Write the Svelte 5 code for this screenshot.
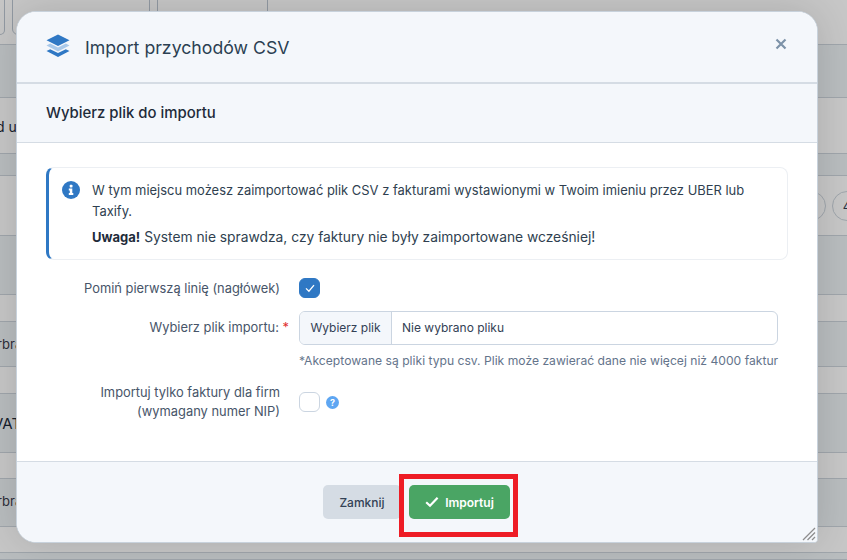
<script>
  const rows = [
    { h: 45, t: 'l' },
    { h: 53, t: 'd' },
    { h: 56, t: 'l', text: 'd u', cls: 'txt-a' },
    { h: 22, t: 'd' },
    { h: 60, t: 'l', circles: true },
    { h: 59, t: 'd' },
    { h: 27, t: 'l' },
    { h: 45, t: 'd', text: 'rbra', cls: 'txt-b' },
    { h: 27, t: 'l' },
    { h: 59, t: 'd', text: 'VAT', cls: 'txt-c' },
    { h: 26, t: 'l' },
    { h: 48, t: 'd', text: 'rbra', cls: 'txt-b' },
    { h: 26, t: 'l' },
    { h: 7, t: 'd' }
  ];
</script>

<div class="page">
  <div class="top-buttons">
    <span class="tb tb0"></span>
    <span class="tb tb1"></span>
    <span class="tb tb2"></span>
  </div>
  {#each rows as r, i}
    <div class="row {r.t}" class:first={i === 0} style="height:{r.h}px">
      {#if r.text}<span class={r.cls}>{r.text}</span>{/if}
      {#if r.circles}
        <span class="circle c1"></span>
        <span class="circle c2">4</span>
      {/if}
    </div>
  {/each}
  <div class="overlay"></div>

  <div class="modal">
    <header class="head">
      <svg class="layers" viewBox="0 0 24 24" width="24" height="24" aria-hidden="true">
        <path fill="#2f78c4" d="M12 0.5 L23.5 6.2 L12 12 L0.5 6.2 Z" />
        <path fill="#a9c9ea" d="M4.2 9.6 L12 13.5 L19.8 9.6 L23.5 11.6 L12 17.4 L0.5 11.6 Z" />
        <path fill="#2f78c4" d="M4.2 15.2 L12 19 L19.8 15.2 L23.5 17.1 L12 23 L0.5 17.1 Z" />
      </svg>
      <h2>Import przychodów CSV</h2>
      <svg class="close" viewBox="0 0 12 12" width="12" height="12" aria-hidden="true">
        <path d="M1.5 1.5 L10.5 10.5 M10.5 1.5 L1.5 10.5" stroke="#7d92a8" stroke-width="2.2" fill="none" />
      </svg>
    </header>
    <div class="sub"><h3>Wybierz plik do importu</h3></div>
    <div class="body">
      <div class="alert">
        <svg class="info" viewBox="0 0 18 18" width="18" height="18" aria-hidden="true">
          <circle cx="9" cy="9" r="9" fill="#2f78c4" />
          <rect x="7.7" y="3.8" width="2.8" height="2.6" rx="0.6" fill="#fff" />
          <path fill="#fff" d="M6.8 7.6 H10.3 V12 H11.3 V13.9 H6.8 V12 H7.8 V9.5 H6.8 Z" />
        </svg>
        <div class="alert-text">
          <p>W tym miejscu możesz zaimportować plik CSV z fakturami wystawionymi w Twoim imieniu przez UBER lub Taxify.</p>
          <p class="warn"><b>Uwaga!</b> System nie sprawdza, czy faktury nie były zaimportowane wcześniej!</p>
        </div>
      </div>

      <div class="form">
        <div class="frow r1">
          <div class="label">Pomiń pierwszą linię (nagłówek)</div>
          <span class="check on">
            <svg viewBox="0 0 12 12" width="12" height="12" aria-hidden="true">
              <path d="M2 6.4 L4.9 9.2 L10 3.2" stroke="#fff" stroke-width="1.3" fill="none" />
            </svg>
          </span>
        </div>
        <div class="frow r2">
          <div class="label">Wybierz plik importu: <span class="req">*</span></div>
          <div class="control">
            <div class="file">
              <span class="file-btn">Wybierz plik</span>
              <span class="file-name">Nie wybrano pliku</span>
            </div>
            <div class="hint">*Akceptowane są pliki typu csv. Plik może zawierać dane nie więcej niż 4000 faktur</div>
          </div>
        </div>
        <div class="frow r3">
          <div class="label">Importuj tylko faktury dla firm<br />(wymagany numer NIP)</div>
          <span class="check"></span>
          <span class="help">?</span>
        </div>
      </div>
    </div>
    <footer class="foot">
      <button class="btn gray">Zamknij</button>
      <span class="mark">
        <button class="btn green">
          <svg viewBox="0 0 14 12" width="14" height="12" aria-hidden="true">
            <path d="M1.2 6.2 L5 9.8 L12.6 1.8" stroke="#fff" stroke-width="2.2" fill="none" />
          </svg>
          Importuj
        </button>
      </span>
      <svg class="grip" viewBox="0 0 14 14" width="14" height="14" aria-hidden="true">
        <path d="M1 13 L13 1 M5.5 13 L13 5.5 M10 13 L13 10" stroke="#8e8e8e" stroke-width="1.3" fill="none" />
      </svg>
    </footer>
  </div>
</div>

<style>
  :global(body) {
    margin: 0;
    background: #fff;
  }
  .page {
    position: relative;
    width: 847px;
    height: 560px;
    overflow: hidden;
    font-family: Inter, "Liberation Sans", sans-serif;
    color: #334155;
  }
  .top-buttons {
    position: absolute;
    top: -10px;
    left: 0;
    display: flex;
    gap: 7px;
    z-index: 1;
  }
  .tb {
    display: block;
    height: 45px;
    border: 1px solid #bcc6d1;
    border-radius: 6px;
    box-sizing: border-box;
  }
  .tb0 { width: 5px; border-left: 0; border-radius: 0 6px 6px 0; }
  .tb1 { width: 138px; }
  .tb2 { width: 111px; }
  .row {
    box-sizing: border-box;
    border-bottom: 1px solid #cdd5dd;
    position: relative;
    overflow: hidden;
  }
  .row.l { background: #fff; }
  .row.d { background: #eef3f5; }
  .row span {
    position: absolute;
    font-size: 14px;
    color: #1e2b3a;
  }
  .txt-a { left: -4px; top: 20px; }
  .row .txt-b { left: -3px; top: 14px; font-size: 13px; color: #3a3a4a; }
  .row .txt-c { left: -7px; top: 20px; font-size: 15px; }
  .row .circle {
    box-sizing: border-box;
    width: 30px;
    height: 30px;
    border: 1px solid #cdd5dd;
    border-radius: 50%;
    top: 15px;
    font-size: 13px;
    line-height: 28px;
    text-align: center;
    color: #334155;
  }
  .c1 { left: 796px; }
  .c2 { left: 832px; }
  .overlay {
    position: absolute;
    inset: 0;
    background: rgba(0, 0, 0, 0.22);
    z-index: 2;
  }
  .modal {
    position: absolute;
    z-index: 3;
    left: 16px;
    top: 11px;
    width: 802px;
    height: 532px;
    box-sizing: border-box;
    border: 1px solid #c8d2dc;
    border-radius: 20px 20px 4px 20px;
    background: #fff;
    box-shadow: 0 0 40px rgba(0, 0, 0, 0.14);
    display: flex;
    flex-direction: column;
    overflow: hidden;
  }
  .head {
    height: 72px;
    box-sizing: border-box;
    flex: none;
    display: flex;
    align-items: center;
    padding: 0 29px 0 29px;
    background: #f4f7fb;
    border-bottom: 2px solid #d5dce4;
  }
  .layers { margin-right: 15px; flex: none; position: relative; top: -1px; }
  h2 {
    margin: 0;
    flex: 1;
    font-size: 17.7px;
    font-weight: 400;
    color: #2b3f52;
  }
  .close { position: relative; top: -3px; left: -1px; }
  .sub {
    height: 59px;
    box-sizing: border-box;
    flex: none;
    display: flex;
    align-items: center;
    padding: 0 29px;
    background: #f4f7fb;
    border-bottom: 1px solid #d5dce4;
  }
  h3 {
    margin: 0;
    font-size: 14.9px;
    font-weight: 500;
    color: #1e2b3a;
  }
  .body {
    flex: 1;
    padding: 24px 29px 0;
    min-height: 0;
  }
  .alert {
    height: 93px;
    box-sizing: border-box;
    border: 1px solid #eceff3;
    border-left: 3px solid #2f78c4;
    border-radius: 8px;
    display: flex;
    padding: 12px 14px 0 13px;
    gap: 12px;
    font-size: 12.94px;
    line-height: 21px;
    color: #2f3f50;
  }
  .info { flex: none; margin-top: 1px; }
  .alert-text p { margin: 0; }
  .alert-text .warn { margin-top: 5px; font-size: 13.8px; }
  .alert b { font-weight: 700; color: #1e2b3a; font-size: 13px; }
  .form { font-size: 12.88px; color: #475569; }
  .frow { display: flex; align-items: flex-start; }
  .label {
    width: 234px;
    text-align: right;
    margin-right: 19px;
    line-height: 19px;
    flex: none;
  }
  .r1 { margin-top: 18px; }
  .r1 .label { padding-top: 1px; }
  .r2 { margin-top: 13px; }
  .r2 .label { padding-top: 7px; width: 243px; margin-right: 10px; }
  .req { color: #e02d2d; }
  .r3 { margin-top: 18px; }
  .r3 .label { margin-top: -4px; }
  .r3 .check { margin-top: 5px; }
  .check {
    width: 21px;
    height: 20px;
    box-sizing: border-box;
    border: 1px solid #cbd5e1;
    border-radius: 6px;
    background: #fff;
    display: flex;
    align-items: center;
    justify-content: center;
    flex: none;
  }
  .check.on { background: #2f78c4; border-color: #2f78c4; }
  .help {
    width: 13px;
    height: 13px;
    margin: 9px 0 0 6px;
    border-radius: 50%;
    background: #5ea6f2;
    color: #fff;
    font-size: 9px;
    font-weight: 700;
    line-height: 13px;
    text-align: center;
  }
  .control { width: 479px; }
  .file {
    height: 34px;
    box-sizing: border-box;
    border: 1px solid #cbd5e1;
    border-radius: 6px;
    display: flex;
    overflow: hidden;
    font-size: 12px;
  }
  .file-btn {
    width: 92px;
    box-sizing: border-box;
    background: #f4f7fb;
    border-right: 1px solid #cbd5e1;
    text-align: center;
    line-height: 32px;
    color: #334155;
    flex: none;
  }
  .file-name {
    padding-left: 10px;
    line-height: 32px;
    color: #334155;
  }
  .hint {
    margin-top: 8px;
    font-size: 12.13px;
    line-height: 16px;
    color: #64748b;
    white-space: nowrap;
  }
  .foot {
    height: 81px;
    box-sizing: border-box;
    flex: none;
    position: relative;
    background: #f4f7fb;
    border-top: 1px solid #d5dce4;
    display: flex;
    justify-content: flex-start;
    align-items: flex-start;
    padding: 23px 0 0 306px;
  }
  .btn {
    height: 34px;
    border: 0;
    border-radius: 5px;
    font-family: inherit;
    font-size: 12px;
    padding: 0;
    display: flex;
    align-items: center;
    justify-content: center;
  }
  .gray {
    width: 78px;
    background: #d5dce4;
    color: #334155;
    font-weight: 500;
  }
  .green {
    width: 101px;
    background: #4aa564;
    color: #fff;
    font-weight: 600;
    gap: 6px;
  }
  .mark {
    position: absolute;
    left: 382px;
    top: 12px;
    width: 119px;
    height: 63px;
    box-sizing: border-box;
    border: 5px solid #ee1c25;
    padding: 6px 0 0 5px;
  }
  .grip { position: absolute; right: 1px; bottom: 1px; }
</style>
